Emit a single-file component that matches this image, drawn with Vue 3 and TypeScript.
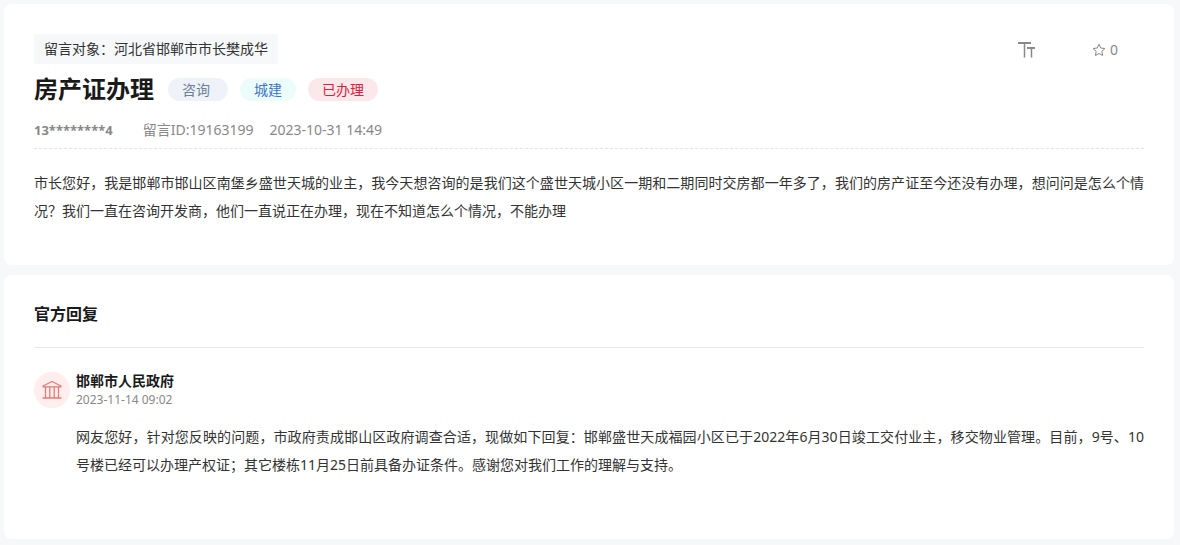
<script setup lang="ts">
interface Tag {
  label: string
  kind: 'type' | 'field' | 'status'
}

const tags: Tag[] = [
  { label: '咨询', kind: 'type' },
  { label: '城建', kind: 'field' },
  { label: '已办理', kind: 'status' },
]

const message = {
  target: '留言对象：河北省邯郸市市长樊成华',
  title: '房产证办理',
  author: '13********4',
  id: '留言ID:19163199',
  time: '2023-10-31 14:49',
  stars: 0,
  body: '市长您好，我是邯郸市邯山区南堡乡盛世天城的业主，我今天想咨询的是我们这个盛世天城小区一期和二期同时交房都一年多了，我们的房产证至今还没有办理，想问问是怎么个情况？我们一直在咨询开发商，他们一直说正在办理，现在不知道怎么个情况，不能办理',
}

const reply = {
  office: '邯郸市人民政府',
  time: '2023-11-14 09:02',
  body: '网友您好，针对您反映的问题，市政府责成邯山区政府调查合适，现做如下回复：邯郸盛世天成福园小区已于2022年6月30日竣工交付业主，移交物业管理。目前，9号、10号楼已经可以办理产权证；其它楼栋11月25日前具备办证条件。感谢您对我们工作的理解与支持。',
}
</script>

<template>
  <main class="page" lang="zh-CN">
    <article class="card message">
      <header class="top">
        <p class="target">{{ message.target }}</p>
        <div class="actions">
          <button type="button" class="action" aria-label="字号">
            <svg width="18" height="16" viewBox="0 0 18 16" fill="none" stroke="currentColor">
              <path d="M0 1h13M9 6h8" stroke-width="2" />
              <path d="M6.500 1v14.500M13.500 6v9.500" stroke-width="1.500" />
            </svg>
          </button>
          <button type="button" class="action">
            <svg width="14" height="14" viewBox="0 0 14 14" fill="none" stroke="currentColor" stroke-linejoin="round">
              <path d="M7 1.200l1.700 3.800 4.200.5-3.100 2.800.8 4.200L7 10.500l-3.600 2 .8-4.200L1.100 5.500l4.200-.5z" />
            </svg>
            <span>{{ message.stars }}</span>
          </button>
        </div>
      </header>

      <div class="heading">
        <h1 class="title">{{ message.title }}</h1>
        <ul class="tags">
          <li v-for="tag in tags" :key="tag.label" class="tag" :class="tag.kind">{{ tag.label }}</li>
        </ul>
      </div>

      <div class="meta">
        <b class="author">{{ message.author }}</b>
        <span class="id">{{ message.id }}</span>
        <time>{{ message.time }}</time>
      </div>

      <p class="body">{{ message.body }}</p>
    </article>

    <section class="card replies">
      <h2 class="section-title">官方回复</h2>
      <article class="reply">
        <div class="avatar">
          <svg width="20" height="20" viewBox="0 0 20 20" fill="none" stroke="currentColor" stroke-linejoin="round">
            <path d="M1 6L10 1.500l9 4.500v.8H1z" stroke-width="1.200" />
            <path d="M3.500 6.500v11M7.800 6.500v11M12.200 6.500v11M16.500 6.500v11M.5 18h19" stroke-width="1.300" />
          </svg>
        </div>
        <div class="reply-main">
          <h3 class="office">{{ reply.office }}</h3>
          <time class="reply-time">{{ reply.time }}</time>
          <p class="body">{{ reply.body }}</p>
        </div>
      </article>
    </section>
  </main>
</template>

<style>
body {
  margin: 0;
  background: #f6f8fa;
}
</style>

<style scoped>
.page {
  display: flex;
  flex-direction: column;
  gap: 10px;
  padding: 4px 6px 6px 4px;
  font-family: "Noto Sans", "Noto Sans CJK SC", sans-serif;
  font-size: 14px;
  color: #333;
}

h1,
h2,
h3,
p,
ul {
  margin: 0;
  padding: 0;
}

.card {
  padding: 30px;
  border-radius: 8px;
  background: #fff;
}

.message {
  padding-bottom: 40px;
}

.top {
  display: flex;
  justify-content: space-between;
  align-items: center;
}

.target {
  padding: 0 10px;
  border-radius: 2px;
  background: #f6f8fa;
  line-height: 30px;
}

.actions {
  display: flex;
  gap: 56px;
  padding-top: 2px;
  padding-right: 26px;
}

.action {
  display: flex;
  align-items: center;
  gap: 4px;
  padding: 0;
  border: 0;
  background: none;
  color: #888;
  font: inherit;
  line-height: 20px;
  cursor: pointer;
}

.heading {
  display: flex;
  align-items: center;
  gap: 14px;
  margin-top: 7px;
}

.title {
  font-size: 24px;
  line-height: 36px;
  color: #1a1a1a;
}

.tags {
  display: flex;
  gap: 12px;
  list-style: none;
}

.tag {
  padding: 0 14px;
  border-radius: 12px;
  line-height: 23px;
}

.type {
  padding-right: 18px;
  background: #eff3f9;
  color: #6b7f99;
}

.field {
  background: #ebfcfa;
  color: #3f74c4;
}

.status {
  background: #fbe8ea;
  color: #d9213f;
}

.meta {
  display: flex;
  align-items: center;
  padding: 13px 0 8px;
  border-bottom: 1px dashed #e4e4e4;
  line-height: 20px;
  color: #888;
}

.author {
  margin-right: 30px;
  font-size: 13px;
}

.id {
  margin-right: 16px;
}

.body {
  line-height: 28px;
  text-align: justify;
}

.meta + .body {
  margin-top: 20px;
}

.replies {
  padding-top: 24px;
  padding-bottom: 60px;
}

.section-title {
  padding-bottom: 18px;
  border-bottom: 1px solid #e6e6e6;
  font-size: 16px;
  line-height: 30px;
  color: #1a1a1a;
}

.reply {
  display: flex;
  gap: 6px;
  margin-top: 24px;
}

.avatar {
  display: flex;
  flex: none;
  align-items: center;
  justify-content: center;
  width: 36px;
  height: 36px;
  border-radius: 50%;
  background: #ffeeed;
  color: #e37c77;
}

.reply-main {
  flex: 1;
}

.office {
  font-size: 14px;
  line-height: 17px;
  color: #1a1a1a;
}

.reply-time {
  display: block;
  margin-bottom: 12px;
  font-size: 12px;
  line-height: 22px;
  color: #888;
}
</style>
